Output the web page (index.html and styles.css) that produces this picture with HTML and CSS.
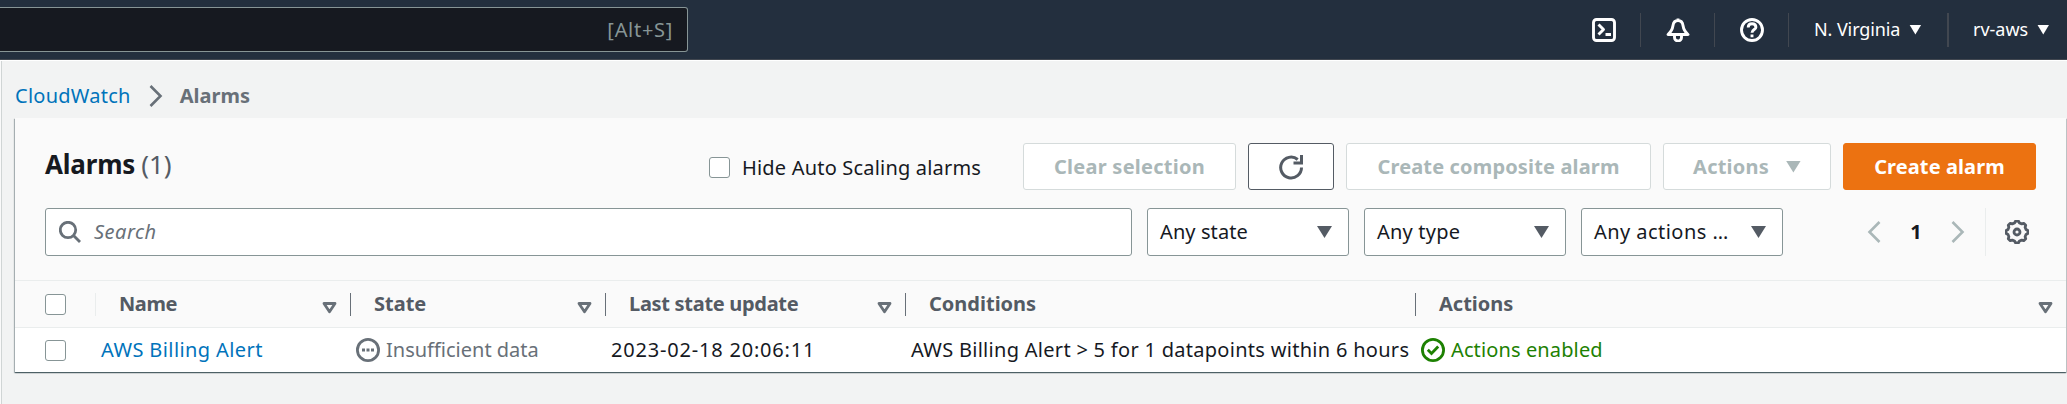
FILE: index.html
```html
<!DOCTYPE html>
<html lang="en">
<head>
<meta charset="utf-8">
<title>CloudWatch Alarms</title>
<link rel="stylesheet" href="styles.css">
</head>
<body>
<header class="topbar">
  <div class="global-search"><span class="t-alt">[Alt+S]</span></div>
  <nav class="tools">
    <a class="tool"><svg width="24" height="24" viewBox="0 0 24 24" class="ico"><rect x="1.5" y="1.5" width="21" height="21" rx="3"/><path d="M6.500 6.500l5 5-5 5M13.500 16.500h5.500" /></svg></a>
    <a class="tool"><svg width="24" height="24" viewBox="0 0 24 24" class="ico"><path d="M12 0.500v2M2 16.500C6 13 6.500 11 7 7.500C7.500 4 9.500 2.500 12 2.500S16.500 4 17 7.500C17.500 11 18 13 22 16.500Z"/><path d="M8.500 17v2.500a3.500 3.500 0 0 0 7 0V17"/></svg></a>
    <a class="tool"><svg width="24" height="24" viewBox="0 0 24 24" class="ico"><circle cx="12" cy="12" r="10.500"/><path d="M8.200 9.500C8.200 7 9.800 5.800 12 5.800S15.900 7 15.900 9.200C15.900 11.500 12 11.500 12 14.700M12 16.500v2.700"/></svg></a>
    <a class="region"><span class="t-reg">N. Virginia</span><i class="caret-sm"></i></a>
    <a class="account"><span class="t-acc">rv-aws</span><i class="caret-sm"></i></a>
  </nav>
</header>
<main class="page">
  <div class="side-edge"></div>
  <div class="content">
    <nav class="crumbs">
      <a class="link t-cw">CloudWatch</a>
      <svg width="14" height="22" viewBox="0 0 14 22" class="chev"><path d="M1.500 1l10 10-10 10"/></svg>
      <b class="t-crumb">Alarms</b>
    </nav>
    <section class="panel">
      <div class="title-row">
        <h1><span class="t-title">Alarms</span><span class="count">(1)</span></h1>
        <label class="hide"><span class="box"></span><span class="t-hide">Hide Auto Scaling alarms</span></label>
        <div class="buttons">
          <button class="btn off w-clear"><span class="t-clear">Clear selection</span></button>
          <button class="btn w-refresh"><svg width="26" height="26" viewBox="0 0 26 26" class="refresh"><path d="M23.500 13.500a10.400 10.400 0 1 1-3.800-8"/><path d="M23.500 1v8h-8"/></svg></button>
          <button class="btn off w-comp"><span class="t-comp">Create composite alarm</span></button>
          <button class="btn off w-act"><span class="t-act">Actions</span><i class="caret"></i></button>
          <button class="btn primary w-create"><span class="t-create">Create alarm</span></button>
        </div>
      </div>
      <div class="filter-row">
        <div class="search"><svg width="22" height="22" viewBox="0 0 22 22" class="mag"><circle cx="9" cy="9" r="7.700"/><path d="M14.500 14.500l6.500 6.500"/></svg><em class="t-search">Search</em></div>
        <div class="select"><span class="t-state">Any state</span><i class="caret"></i></div>
        <div class="select"><span class="t-type">Any type</span><i class="caret"></i></div>
        <div class="select"><span class="t-actions">Any actions …</span><i class="caret"></i></div>
        <div class="pager">
          <svg width="14" height="22" viewBox="0 0 14 22" class="page-arrow"><path d="M12.500 1l-10 10 10 10"/></svg>
          <b>1</b>
          <svg width="14" height="22" viewBox="0 0 14 22" class="page-arrow"><path d="M1.500 1l10 10-10 10"/></svg>
        </div>
        <div class="prefs"><svg width="24" height="24" viewBox="0 0 24 24" class="gear"><path d="M9.500 3L10.500 1.200h3L14.500 3l2.200.9 2-.6 2 2-.6 2 .9 2.200 1.800 1v3l-1.800 1-.9 2.200.6 2-2 2-2-.6-2.200.9-1 1.800h-3l-1-1.800-2.200-.9-2 .6-2-2 .6-2L3 14.500l-1.800-1v-3L3 9.500l.9-2.200-.6-2 2-2 2 .6z"/><circle cx="12" cy="12" r="3"/></svg></div>
      </div>
      <div class="grid head">
        <div class="cell check"><span class="box"></span></div>
        <div class="cell first"><span class="t-name">Name</span><svg width="15" height="12" viewBox="0 0 15 12" class="sort"><path d="M2 1.500h11L7.500 9.800z"/></svg></div>
        <div class="cell"><span class="t-st">State</span><svg width="15" height="12" viewBox="0 0 15 12" class="sort"><path d="M2 1.500h11L7.500 9.800z"/></svg></div>
        <div class="cell"><span class="t-last">Last state update</span><svg width="15" height="12" viewBox="0 0 15 12" class="sort"><path d="M2 1.500h11L7.500 9.800z"/></svg></div>
        <div class="cell"><span class="t-cond">Conditions</span></div>
        <div class="cell"><span class="t-ach">Actions</span><svg width="15" height="12" viewBox="0 0 15 12" class="sort"><path d="M2 1.500h11L7.500 9.800z"/></svg></div>
      </div>
      <div class="grid row">
        <div class="cell check"><span class="box"></span></div>
        <div class="cell"><a class="link t-alert">AWS Billing Alert</a></div>
        <div class="cell muted"><svg width="24" height="24" viewBox="0 0 24 24" class="status"><circle cx="12" cy="12" r="10.600"/><path d="M6 12h3M10.500 12h3M15 12h3"/></svg><span class="t-insuf">Insufficient data</span></div>
        <div class="cell"><span class="t-date">2023-02-18 20:06:11</span></div>
        <div class="cell"><span class="t-rule">AWS Billing Alert &gt; 5 for 1 datapoints within 6 hours</span></div>
        <div class="cell ok"><svg width="24" height="24" viewBox="0 0 24 24" class="status"><circle cx="12" cy="12" r="10.600"/><path d="M6.800 11.800l3.700 3.700 6.700-7"/></svg><span class="t-enabled">Actions enabled</span></div>
      </div>
    </section>
  </div>
</main>
</body>
</html>
```
FILE: styles.css
```css
* { box-sizing: border-box; }
body { margin: 0; width: 2067px; height: 404px; overflow: hidden; background: #f2f3f3; color: #16191f; font: 20px/30px "Noto Sans", sans-serif; }
span, b, em, a { white-space: nowrap; }
svg { display: block; flex: none; fill: none; }

.topbar { display: flex; height: 60px; background: #232f3e; border-bottom: 1px solid #414750; }
.global-search { width: 688px; height: 45px; margin-top: 7px; padding: 0 14px; display: flex; align-items: center; justify-content: flex-end; background: #161920; border: 1px solid #879596; border-left: 0; border-radius: 0 3px 3px 0; color: #879596; }
.tools { display: flex; align-items: center; margin-left: auto; color: #fff; font-size: 18px; }
.tool { width: 74px; height: 34px; border-right: 1px solid #414750; display: flex; align-items: center; justify-content: center; }
.ico { stroke: #fff; stroke-width: 2.900; stroke-linejoin: round; }
.region, .account { display: flex; align-items: center; height: 34px; }
.region span, .account span { padding-bottom: 2px; }
.region { width: 160px; padding-left: 25px; border-right: 2px solid #414750; }
.account { width: 118px; padding-left: 24px; }
.caret-sm { width: 12px; height: 10px; background: #fff; clip-path: polygon(0 0, 100% 0, 50% 100%); margin-left: 9px; }

.page { display: flex; height: 344px; border-top: 1px solid #fff; }
.side-edge { width: 2px; background: #fafafa; border-right: 1px solid #d0d5d5; flex: none; }
.content { flex: 1; padding-left: 13px; }
.crumbs { display: flex; align-items: center; height: 57px; padding: 12px 0 0; color: #687078; }
.link { color: #0073bb; }
.chev { stroke: #687078; stroke-width: 2.600; margin: 0 17px 0 18px; }

.panel { width: 2051px; height: 254px; background: #fafafa; border-radius: 0; box-shadow: 0 1px 1px 0 rgba(0,28,36,.5), 1px 1px 1px 0 rgba(0,28,36,.15), -1px 1px 1px 0 rgba(0,28,36,.25); }
.title-row { display: flex; height: 90px; padding: 25px 30px 18px; align-items: center; }
h1 { margin: 0; padding-bottom: 5px; width: 664px; font-size: 26px; line-height: 36px; display: flex; gap: 6px; }
.count { color: #545b64; font-weight: 400; }
.hide { display: flex; align-items: center; gap: 12px; width: 314px; padding-top: 2px; }
.box { width: 21px; height: 21px; background: #fff; border: 1.500px solid #879596; border-radius: 3px; flex: none; }
.buttons { display: flex; gap: 12px; }
.btn { height: 47px; padding: 0; display: flex; align-items: center; justify-content: center; background: #fff; border: 1px solid #545b64; border-radius: 3px; font: 700 20px/30px "Noto Sans", sans-serif; color: #545b64; }
.off { border-color: #d5dbdb; color: #aab7b8; }
.primary { background: #ec7211; border-color: #ec7211; color: #fff; }
.w-clear { width: 213px; }
.w-refresh { width: 86px; }
.w-comp { width: 305px; }
.w-act { width: 168px; gap: 17px; }
.w-create { width: 193px; }
.refresh { stroke: #545b64; stroke-width: 3; }
.caret { width: 15px; height: 12px; background: #545b64; clip-path: polygon(0 0, 100% 0, 50% 100%); flex: none; }
.off .caret { background: #aab7b8; }

.filter-row { display: flex; height: 48px; padding-left: 30px; }
.search { width: 1087px; display: flex; align-items: center; gap: 13px; padding-left: 13px; background: #fff; border: 1px solid #879596; border-radius: 3px; color: #687078; }
.mag { stroke: #687078; stroke-width: 2.800; }
.select { width: 202px; margin-left: 15px; padding: 0 16px 0 12px; display: flex; align-items: center; justify-content: space-between; background: #fff; border: 1px solid #879596; border-radius: 3px; }
.pager { display: flex; align-items: center; justify-content: space-between; width: 98px; margin-left: 84px; }
.page-arrow { stroke: #aab7b8; stroke-width: 2.600; }
.prefs { margin-left: 20px; padding-left: 19px; border-left: 1px solid #eaeded; display: flex; align-items: center; }
.gear { stroke: #545b64; stroke-width: 2.800; stroke-linejoin: round; }

.grid { display: grid; grid-template-columns: 80px 255px 255px 300px 510px 651px; }
.head { margin-top: 24px; height: 48px; border-top: 1px solid #eaeded; border-bottom: 1px solid #eaeded; font-weight: 700; color: #545b64; align-items: center; }
.cell { display: flex; align-items: center; }
.head .cell { height: 23px; padding: 0 13px 0 23px; justify-content: space-between; border-left: 1px solid #687078; }
.head .first { border-left-color: #eaeded; }
.head .check { border: 0; padding-left: 30px; }
.sort { stroke: #687078; stroke-width: 2.800; stroke-linejoin: round; margin-top: 7px; }
.row { height: 44px; background: #fff; align-items: center; }
.row .cell { padding-left: 6px; gap: 6px; }
.row .check { padding-left: 30px; }
.status { stroke: currentColor; stroke-width: 2.800; }
.muted { color: #687078; }
.ok { color: #1d8102; }

/* Tracking per label */
.t-alt { letter-spacing: .7px; }
.t-reg { letter-spacing: -.1px; }
.t-cw { letter-spacing: .25px; }
.t-title { letter-spacing: -.2px; }
.t-hide { letter-spacing: .19px; }
.t-clear { letter-spacing: .25px; }
.t-comp { letter-spacing: .15px; }
.t-act { letter-spacing: .2px; }
.t-create { letter-spacing: .1px; }
.t-search { letter-spacing: .5px; }
.t-state { letter-spacing: .1px; }
.t-type { letter-spacing: .2px; }
.t-actions { letter-spacing: .45px; }
.t-name { letter-spacing: -.4px; }
.t-last { letter-spacing: -.3px; }
.t-alert { letter-spacing: .4px; }
.t-date { letter-spacing: .8px; }
.t-rule { letter-spacing: .29px; }
.t-enabled { letter-spacing: .12px; }
```
